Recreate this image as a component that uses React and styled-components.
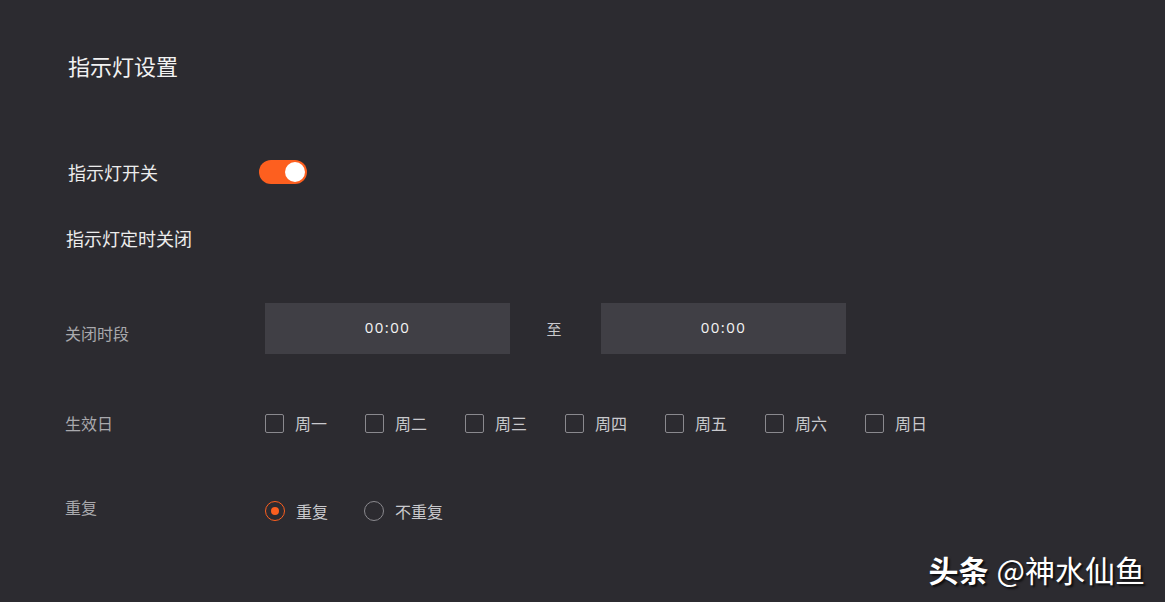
import React, { useState } from 'react';
import styled, { createGlobalStyle } from 'styled-components';

const Global = createGlobalStyle`
  html, body {
    margin: 0;
    padding: 0;
    background: #2c2b30;
  }
  body {
    font-family: "Noto Sans CJK SC", "Liberation Sans", sans-serif;
  }
`;

const Page = styled.div`
  width: 1165px;
  height: 602px;
  background: #2c2b30;
  box-sizing: border-box;
  padding: 49px 0 0 65px;
  position: relative;
  overflow: hidden;
  display: flex;
  flex-direction: column;
`;

const Title = styled.h1`
  margin: 0 0 0 3px;
  font-size: 22px;
  font-weight: 400;
  line-height: 32px;
  color: #f2f2f2;
`;

const Row = styled.div`
  display: flex;
  align-items: center;
  margin-top: ${p => p.top}px;
  height: ${p => p.h || 24}px;
`;

const Label = styled.div`
  width: 200px;
  flex: none;
  font-size: ${p => (p.strong ? 18 : 16)}px;
  color: ${p => (p.strong ? '#ececec' : '#a9a9ad')};
  padding-left: ${p => p.indent || 0}px;
  box-sizing: border-box;
  line-height: 24px;
  transform: translateY(${p => p.dy || 0}px);
`;

const Heading = styled.div`
  margin-top: ${p => p.top}px;
  margin-left: 1px;
  font-size: 18px;
  color: #ececec;
  line-height: 24px;
`;

const Switch = styled.button`
  width: 48px;
  height: 24px;
  border-radius: 12px;
  border: none;
  padding: 0;
  background: ${p => (p.on ? '#fd5f1f' : '#5a5960')};
  position: relative;
  cursor: pointer;
  margin-left: -6px;

  &::after {
    content: '';
    position: absolute;
    top: 2px;
    left: ${p => (p.on ? 26 : 2)}px;
    width: 20px;
    height: 20px;
    border-radius: 50%;
    background: #ffffff;
  }
`;

const TimeBox = styled.div`
  width: 245px;
  height: 51px;
  background: #403f45;
  color: #f4f4f4;
  font-family: "Open Sans", "Liberation Sans", sans-serif;
  font-size: 15px;
  letter-spacing: 1.5px;
  display: flex;
  align-items: center;
  justify-content: center;
  padding-bottom: 3px;
  box-sizing: border-box;
`;

const To = styled.div`
  width: 91px;
  text-align: center;
  font-size: 15px;
  color: #c8c8cc;
  padding-right: 3px;
  box-sizing: border-box;
`;

const Days = styled.div`
  display: flex;
  align-items: center;
`;

const Check = styled.label`
  width: 100px;
  display: flex;
  align-items: center;
  gap: 11px;
  font-size: 16px;
  color: #c9c9cd;
  cursor: pointer;
`;

const Box = styled.span`
  width: 17px;
  height: 17px;
  border: 1px solid #8a898e;
  border-radius: 2px;
  flex: none;
`;

const Radios = styled.div`
  display: flex;
  align-items: center;
  transform: translateY(4px);
`;

const Radio = styled.label`
  display: flex;
  align-items: center;
  gap: 11px;
  margin-right: ${p => p.gap || 0}px;
  font-size: 16px;
  color: #c9c9cd;
  cursor: pointer;
`;

const Circle = styled.span`
  width: 18px;
  height: 18px;
  border-radius: 50%;
  border: 1px solid ${p => (p.on ? '#fd5f1f' : '#8a898e')};
  display: flex;
  align-items: center;
  justify-content: center;
  flex: none;

  &::after {
    content: '';
    width: 8px;
    height: 8px;
    border-radius: 50%;
    background: ${p => (p.on ? '#fd5f1f' : 'transparent')};
  }
`;

const Mark = styled.div`
  position: absolute;
  right: 20px;
  bottom: 14px;
  font-size: 30px;
  line-height: 38px;
  color: #ffffff;
  text-shadow: 2px 2px 2px rgba(0, 0, 0, 0.7);
  display: flex;
  align-items: baseline;
  gap: 8px;

  b {
    font-weight: 700;
  }
`;

const days = ['周一', '周二', '周三', '周四', '周五', '周六', '周日'];

export default function App() {
  const [on, setOn] = useState(true);
  const [repeat, setRepeat] = useState(true);

  return (
    <Page>
      <Global />
      <Title>指示灯设置</Title>

      <Row top={79}>
        <Label strong indent={3}>指示灯开关</Label>
        <Switch on={on} onClick={() => setOn(!on)} />
      </Row>

      <Heading top={42}>指示灯定时关闭</Heading>

      <Row top={53} h={51}>
        <Label dy={4}>关闭时段</Label>
        <TimeBox>00:00</TimeBox>
        <To>至</To>
        <TimeBox>00:00</TimeBox>
      </Row>

      <Row top={57}>
        <Label>生效日</Label>
        <Days>
          {days.map(d => (
            <Check key={d}>
              <Box />
              {d}
            </Check>
          ))}
        </Days>
      </Row>

      <Row top={60}>
        <Label>重复</Label>
        <Radios>
          <Radio gap={36} onClick={() => setRepeat(true)}>
            <Circle on={repeat} />
            重复
          </Radio>
          <Radio onClick={() => setRepeat(false)}>
            <Circle on={!repeat} />
            不重复
          </Radio>
        </Radios>
      </Row>

      <Mark>
        <b>头条</b>
        <span>@神水仙鱼</span>
      </Mark>
    </Page>
  );
}
